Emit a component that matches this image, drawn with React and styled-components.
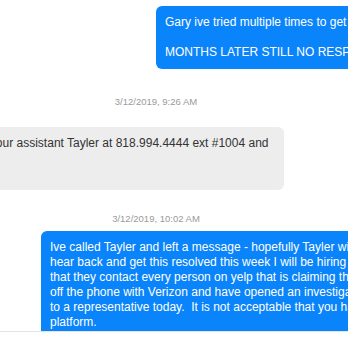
import React from "react";
import styled, { createGlobalStyle } from "styled-components";

const GlobalStyle = createGlobalStyle`
  html, body {
    margin: 0;
    padding: 0;
    background: #ffffff;
    overflow: hidden;
  }
  body {
    font-family: "Liberation Sans", Arial, sans-serif;
  }
`;

const Window = styled.div`
  width: 348px;
  height: 348px;
  overflow: hidden;
  display: flex;
  flex-direction: column;
  background: #ffffff;
`;

const MessageArea = styled.div`
  flex: 1;
  min-height: 0;
  overflow: hidden;
`;

const Thread = styled.div`
  width: 712px;
  margin-left: -200px;
  padding-top: 6px;
  display: flex;
  flex-direction: column;
`;

const Bubble = styled.div`
  box-sizing: border-box;
  width: ${(p) => p.$width}px;
  margin-top: ${(p) => p.$top || 0}px;
  padding: 9px;
  border-radius: 6px;
  font-size: 12px;
  line-height: 15px;
  white-space: pre;
  overflow: hidden;
  align-self: ${(p) => (p.$sent ? "flex-end" : "flex-start")};
  margin-right: ${(p) => (p.$sent ? "10px" : "0")};
  margin-left: ${(p) => (p.$sent ? "0" : "29px")};
  background: ${(p) => (p.$sent ? "#0a84fa" : "#ededed")};
  color: ${(p) => (p.$sent ? "#ffffff" : "#333333")};
  flex-shrink: 0;
`;

const Timestamp = styled.div`
  margin-top: ${(p) => p.$top}px;
  text-align: center;
  font-size: 9.5px;
  line-height: 14px;
  color: #9a9a9a;
  flex-shrink: 0;
`;

const Composer = styled.div`
  height: 16px;
  border-top: 1px solid #e4e4e4;
  background: #ffffff;
  flex-shrink: 0;
`;

const messages = [
  {
    kind: "sent",
    width: 346,
    top: 0,
    text: "Gary ive tried multiple times to get a hold of you.\n\nMONTHS LATER STILL NO RESPONSE",
  },
  { kind: "time", top: 26, text: "3/12/2019, 9:26 AM" },
  {
    kind: "received",
    width: 455,
    top: 18,
    text:
      "Hi Gary, please reach out to your assistant Tayler at 818.994.4444 ext #1004 and\nshe can help you.\nThanks!",
  },
  { kind: "time", top: 22, text: "3/12/2019, 10:02 AM" },
  {
    kind: "sent",
    width: 461,
    top: 5,
    text:
      "Ive called Tayler and left a message - hopefully Tayler will call me back. If I don't\n" +
      "hear back and get this resolved this week I will be hiring an attorney and requesting\n" +
      "that they contact every person on yelp that is claiming the same thing. I just got\n" +
      "off the phone with Verizon and have opened an investigation and have spoken\n" +
      "to a representative today.  It is not acceptable that you have been allowed on this\n" +
      "platform.",
  },
];

export default function App() {
  return (
    <>
      <GlobalStyle />
      <Window>
        <MessageArea>
          <Thread>
            {messages.map((m, i) =>
              m.kind === "time" ? (
                <Timestamp key={i} $top={m.top}>
                  {m.text}
                </Timestamp>
              ) : (
                <Bubble key={i} $sent={m.kind === "sent"} $width={m.width} $top={m.top}>
                  {m.text}
                </Bubble>
              )
            )}
          </Thread>
        </MessageArea>
        <Composer />
      </Window>
    </>
  );
}
